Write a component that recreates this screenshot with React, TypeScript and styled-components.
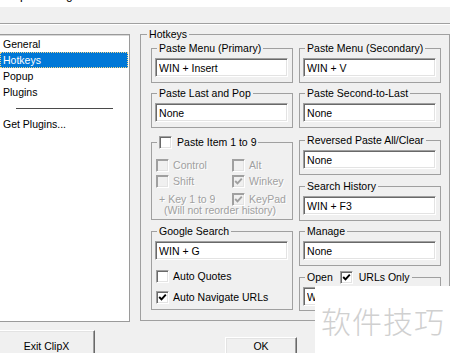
import React from "react";
import styled, { createGlobalStyle } from "styled-components";

const Global = createGlobalStyle`
  html, body { margin: 0; padding: 0; background: #f0f0f0; overflow: hidden; }
  body { font-family: "Liberation Sans", Arial, sans-serif; font-size: 10.5px; color: #000; }
  #root { width: 450px; height: 353px; overflow: hidden; }
`;

const Window = styled.div`
  position: relative;
  width: 450px;
  height: 353px;
  overflow: hidden;
  background: #f0f0f0;
`;

const TitleBar = styled.div`
  height: 7px;
  background: #fff;
  overflow: hidden;
`;

const TitleText = styled.div`
  margin: -12px 0 0 6px;
  font-size: 12px;
  line-height: 14px;
  color: #000;
`;

const TopStrip = styled.div`
  height: 16px;
  background: #f0f0f0;
  border-bottom: 1px solid #a0a0a0;
  box-shadow: 0 1px 0 #fff;
`;

const Main = styled.div`
  display: flex;
  align-items: flex-start;
  padding-top: 4px;
`;

const ListBox = styled.div`
  box-sizing: border-box;
  width: 133px;
  height: 288px;
  margin: 6px 0 0 -2px;
  padding: 1px;
  background: #fff;
  border: 1px solid #9a9a9a;
  box-shadow: inset 0 1px 0 #d8d8d8;
`;

const ListItem = styled.div<{ $selected?: boolean }>`
  height: 16px;
  line-height: 16px;
  padding-left: 3px;
  background: ${(p) => (p.$selected ? "#0078d7" : "transparent")};
  color: ${(p) => (p.$selected ? "#fff" : "#000")};
  outline: ${(p) => (p.$selected ? "1px dotted #f5d78a" : "none")};
  outline-offset: -1px;
`;

const ListSeparator = styled.div`
  height: 16px;
  display: flex;
  align-items: center;
  padding-left: 16px;
  &::after {
    content: "";
    width: 97px;
    height: 1px;
    background: #4a4a4a;
  }
`;

const OuterGroup = styled.fieldset`
  box-sizing: border-box;
  width: 312px;
  height: 293px;
  margin: 0 0 0 10px;
  padding: 1px 0 0 10px;
  border: 1px solid #a0a0a0;
  min-width: 0;
`;

const OuterLegend = styled.legend`
  margin-left: -4px;
  padding: 0 2px;
  line-height: 13px;
  height: 13px;
`;

const Columns = styled.div`
  display: grid;
  grid-template-columns: 142px 142px;
  column-gap: 6px;
  align-items: start;
`;

const Column = styled.div`
  display: flex;
  flex-direction: column;
`;

const Group = styled.fieldset<{ $h?: number; $mt?: number }>`
  box-sizing: border-box;
  height: ${(p) => p.$h ?? 41}px;
  margin: ${(p) => p.$mt ?? 0}px 0 0;
  padding: 3px 4px 5px 3px;
  border: 1px solid #a0a0a0;
  min-width: 0;
`;

const Legend = styled.legend`
  margin-left: 2px;
  padding: 0 2px;
  height: 13px;
  line-height: 13px;
  white-space: nowrap;
`;

const LegendPart = styled.span<{ $gap?: number }>`
  display: inline-block;
  vertical-align: top;
  margin-left: ${(p) => p.$gap ?? 0}px;
`;

const Field = styled.input`
  display: block;
  box-sizing: border-box;
  width: 100%;
  height: 19px;
  margin: 0;
  padding: 0 0 0 3px;
  font: inherit;
  color: #000;
  background: #fff;
  border: 1px solid;
  border-color: #a0a0a0 #fff #fff #a0a0a0;
  box-shadow: inset 1px 1px 0 #696969, inset -1px -1px 0 #e3e3e3;
  outline: none;
`;

const Box = styled.span<{ $disabled?: boolean }>`
  display: inline-flex;
  align-items: center;
  justify-content: center;
  flex: none;
  box-sizing: border-box;
  width: 13px;
  height: 13px;
  vertical-align: top;
  background: ${(p) => (p.$disabled ? "#f0f0f0" : "#fff")};
  border: 1px solid;
  border-color: #a0a0a0 #fff #fff #a0a0a0;
  box-shadow: inset 1px 1px 0 ${(p) => (p.$disabled ? "#a0a0a0" : "#696969")},
    inset -1px -1px 0 #e3e3e3;
`;

const Check = ({ checked, disabled }: { checked?: boolean; disabled?: boolean }) => (
  <Box $disabled={disabled}>
    {checked && (
      <svg width="9" height="9" viewBox="0 0 9 9">
        <path
          d="M1.2 4 L3.5 6.4 L7.8 1.6"
          fill="none"
          stroke={disabled ? "#a0a0a0" : "#000"}
          strokeWidth="1.9"
        />
      </svg>
    )}
  </Box>
);

const CheckRow = styled.div<{ $disabled?: boolean; $h?: number }>`
  display: flex;
  align-items: center;
  gap: 4px;
  height: ${(p) => p.$h ?? 16}px;
  color: ${(p) => (p.$disabled ? "#a0a0a0" : "#000")};
  text-shadow: ${(p) => (p.$disabled ? "1px 1px 0 #fff" : "none")};
  white-space: nowrap;
`;

const OptionGrid = styled.div`
  display: grid;
  grid-template-columns: 76px auto;
  margin-top: 5px;
  margin-left: 1px;
`;

const Note = styled.div<{ $pad?: number }>`
  height: 16px;
  line-height: 16px;
  padding-left: ${(p) => p.$pad ?? 0}px;
  color: #a0a0a0;
  text-shadow: 1px 1px 0 #fff;
  white-space: nowrap;
`;

const CenterNote = styled(Note)`
  text-align: center;
  height: 13px;
  line-height: 13px;
  margin: -3px 0 0 -3px;
`;

const GoogleOptions = styled.div`
  margin-top: 8px;
  margin-left: 1px;
  display: flex;
  flex-direction: column;
  gap: 5px;
`;

const Footer = styled.div`
  display: flex;
  align-items: flex-start;
`;

const Button = styled.div<{ $w: number; $mt: number; $ml: number; $pt: number }>`
  box-sizing: border-box;
  width: ${(p) => p.$w}px;
  height: 30px;
  margin: ${(p) => p.$mt}px 0 0 ${(p) => p.$ml}px;
  padding-top: ${(p) => p.$pt}px;
  text-align: center;
  line-height: 13px;
  background: #f0f0f0;
  border: 1px solid;
  border-color: #fff #696969 #696969 #fff;
  box-shadow: inset -1px -1px 0 #a0a0a0, inset 1px 1px 0 #e3e3e3;
`;

const Watermark = styled.div`
  position: absolute;
  left: 315px;
  top: 286px;
  right: 0;
  bottom: 0;
  background: #fff;
  display: flex;
  align-items: center;
  padding-left: 6px;
  font-family: "Noto Sans CJK SC", sans-serif;
  font-size: 30px;
  font-weight: 300;
  letter-spacing: 1px;
  color: #d0d0d0;
`;

export default function App() {
  return (
    <>
      <Global />
      <Window>
        <TitleBar>
          <TitleText>ClipX Configure</TitleText>
        </TitleBar>
        <TopStrip />
        <Main>
          <ListBox>
            <ListItem>General</ListItem>
            <ListItem $selected>Hotkeys</ListItem>
            <ListItem>Popup</ListItem>
            <ListItem>Plugins</ListItem>
            <ListSeparator />
            <ListItem>Get Plugins...</ListItem>
          </ListBox>
          <OuterGroup>
            <OuterLegend>Hotkeys</OuterLegend>
            <Columns>
              <Column>
                <Group>
                  <Legend>Paste Menu (Primary)</Legend>
                  <Field readOnly value="WIN + Insert" />
                </Group>
                <Group $mt={4}>
                  <Legend>Paste Last and Pop</Legend>
                  <Field readOnly value="None" />
                </Group>
                <Group $mt={8} $h={84}>
                  <Legend>
                    <LegendPart>
                      <Check />
                    </LegendPart>
                    <LegendPart $gap={5}>Paste Item 1 to 9</LegendPart>
                  </Legend>
                  <OptionGrid>
                    <CheckRow $disabled>
                      <Check disabled />
                      Control
                    </CheckRow>
                    <CheckRow $disabled>
                      <Check disabled />
                      Alt
                    </CheckRow>
                    <CheckRow $disabled>
                      <Check disabled />
                      Shift
                    </CheckRow>
                    <CheckRow $disabled>
                      <Check disabled checked />
                      Winkey
                    </CheckRow>
                    <Note $pad={3} style={{ marginTop: 2 }}>
                      + Key 1 to 9
                    </Note>
                    <CheckRow $disabled style={{ marginTop: 2 }}>
                      <Check disabled checked />
                      KeyPad
                    </CheckRow>
                  </OptionGrid>
                  <CenterNote>(Will not reorder history)</CenterNote>
                </Group>
                <Group $mt={5} $h={85}>
                  <Legend>Google Search</Legend>
                  <Field readOnly value="WIN + G" />
                  <GoogleOptions>
                    <CheckRow>
                      <Check />
                      Auto Quotes
                    </CheckRow>
                    <CheckRow>
                      <Check checked />
                      Auto Navigate URLs
                    </CheckRow>
                  </GoogleOptions>
                </Group>
              </Column>
              <Column>
                <Group>
                  <Legend>Paste Menu (Secondary)</Legend>
                  <Field readOnly value="WIN + V" />
                </Group>
                <Group $mt={4}>
                  <Legend>Paste Second-to-Last</Legend>
                  <Field readOnly value="None" />
                </Group>
                <Group $mt={6}>
                  <Legend>Reversed Paste All/Clear</Legend>
                  <Field readOnly value="None" />
                </Group>
                <Group $mt={5}>
                  <Legend>Search History</Legend>
                  <Field readOnly value="WIN + F3" />
                </Group>
                <Group $mt={4}>
                  <Legend>Manage</Legend>
                  <Field readOnly value="None" />
                </Group>
                <Group $mt={5} $h={40}>
                  <Legend>
                    <LegendPart>Open</LegendPart>
                    <LegendPart $gap={7}>
                      <Check checked />
                    </LegendPart>
                    <LegendPart $gap={6}>URLs Only</LegendPart>
                  </Legend>
                  <Field readOnly value="WIN + O" />
                </Group>
              </Column>
            </Columns>
          </OuterGroup>
        </Main>
        <Footer>
          <Button $w={97} $mt={8} $ml={-2} $pt={9}>
            Exit ClipX
          </Button>
          <Button $w={72} $mt={15} $ml={130} $pt={2}>
            OK
          </Button>
        </Footer>
        <Watermark>软件技巧</Watermark>
      </Window>
    </>
  );
}
